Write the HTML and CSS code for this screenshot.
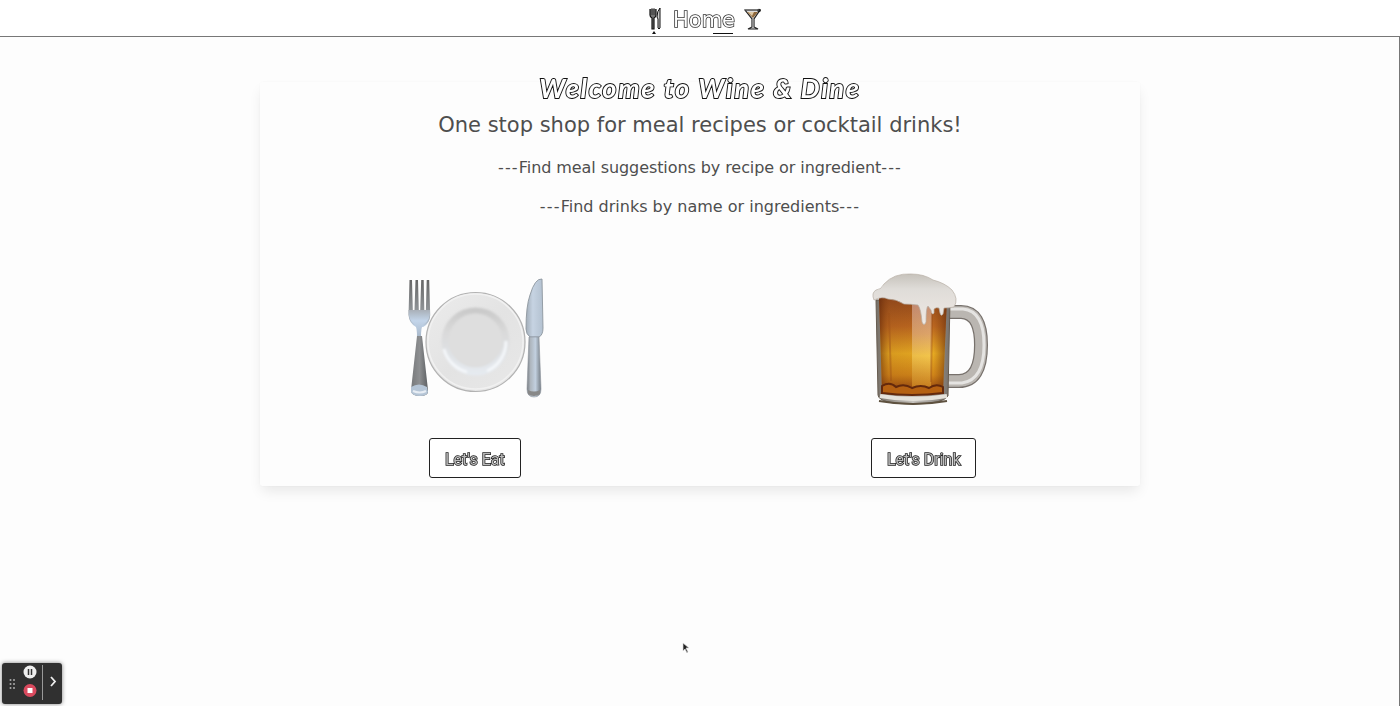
FILE: index.html
```html
<!DOCTYPE html>
<html lang="en">
<head>
<meta charset="utf-8">
<title>Wine &amp; Dine</title>
<link rel="stylesheet" href="styles.css">
</head>
<body>
<header class="navbar">
  <svg class="nav-utensils" width="13" height="28" viewBox="0 0 13 28">
    <path d="M1 2v6q0 2 2 3v11h2V11q2-1 2-3V2" fill="#777" stroke="#111" stroke-width="1.2"/>
    <path d="M3 1v7M5 1v7" stroke="#222" stroke-width=".8"/>
    <path d="M11 1q-3 3-3 9l1 2v9q1 2 2 0z" fill="#ccc" stroke="#111"/>
    <path d="M3 27l2-3 2 3z" fill="#111"/>
  </svg>
  <a class="nav-home">Home</a>
  <svg class="nav-cocktail" width="18" height="23" viewBox="0 0 18 23">
    <path d="M1 2h15l-6 9v8l4 2H4l4-2v-8z" fill="#ddd" stroke="#222" stroke-width="1.2"/>
    <path d="M3 4h11l-5 6z" fill="#8f683b"/><path d="M4 4h6l-2 4z" fill="#dfc9a6"/><path d="M9 11v8" stroke="#888" stroke-width="2"/>
    <circle cx="15" cy="2.500" r="1.800" fill="#222"/>
    <path d="M1 2h14" stroke="#666"/>
  </svg>
</header>
<main class="page">
  <section class="card">
    <h1 class="title">Welcome to Wine &amp; Dine</h1>
    <h2 class="subtitle">One stop shop for meal recipes or cocktail drinks!</h2>
    <p class="line"><span class="dash">---</span>Find meal suggestions by recipe or ingredient<span class="dash">---</span></p>
    <p class="line line-drinks"><span class="dash">---</span>Find drinks by name or ingredients<span class="dash">---</span></p>
    <div class="choices">
      <div class="choice choice-eat">
        <svg class="art" width="160" height="145" viewBox="0 0 160 145">
          <defs>
            <linearGradient id="handle"><stop offset="0" stop-color="#77797b"/><stop offset=".5" stop-color="#8d8f91"/><stop offset="1" stop-color="#5c5f62"/></linearGradient>
            <linearGradient id="blade"><stop offset="0" stop-color="#a2adb8"/><stop offset=".4" stop-color="#c6d3e2"/><stop offset="1" stop-color="#b3c1d0"/></linearGradient>
            <linearGradient id="knife"><stop offset="0" stop-color="#777c82"/><stop offset=".25" stop-color="#aeb6be"/><stop offset=".6" stop-color="#c2d0df"/><stop offset="1" stop-color="#757d85"/></linearGradient>
            <linearGradient id="tine" x2="0" y2="1"><stop offset="0" stop-color="#666"/><stop offset=".7" stop-color="#94989c"/><stop offset="1" stop-color="#bfd2e8"/></linearGradient>
            <linearGradient id="fork" x2="0" y2="1"><stop offset="0" stop-color="#a9b0b8"/><stop offset=".4" stop-color="#c3d5ea"/><stop offset="1" stop-color="#a8b8ca"/></linearGradient>
            <linearGradient id="well" x2="0" y2="1"><stop offset="0" stop-color="#c8c8c8"/><stop offset=".35" stop-color="#d9d9d9"/><stop offset="1" stop-color="#e6ebf1"/></linearGradient>
            <linearGradient id="plate" x2="1" y2="1"><stop offset="0" stop-color="#ececec"/><stop offset=".5" stop-color="#e3e3e3"/><stop offset="1" stop-color="#e8e8e8"/></linearGradient>
            <filter id="soft"><feGaussianBlur stdDeviation=".8"/></filter>
          </defs>
          <circle cx="80.500" cy="77" r="49.500" fill="url(#plate)" stroke="#b2b2b2" stroke-width="1.200"/>
          <circle cx="80.500" cy="76.500" r="47.500" fill="none" stroke="#f1f1f1" stroke-width="1.500"/>
          <g filter="url(#soft)">
            <circle cx="80.500" cy="76.500" r="34" fill="url(#well)"/>
            <path d="M49 84a32 32 0 0 0 23 23M92 106a32 32 0 0 0 19-30" fill="none" stroke="#f4f7fa" stroke-width="3"/>
            <circle cx="80.500" cy="75.500" r="27" fill="#dedede"/>
          </g>
          <path d="M14.500 15h2.500l.8 30h1.700l1-30h2.500l.8 30h1.400l1-30h2.500l.6 30h1.600l.8-30h2.500l1 35q0 8-7 12H21q-7-4-7.500-12z" fill="url(#tine)"/>
          <path d="M13.500 45h21.500q1 10-7 15-2 2-2 12h-4q0-10-2-12-7-5-6.500-15z" fill="url(#fork)"/>
          <path d="M22 71h5l6 54q1 6-8 6t-9-6z" fill="url(#handle)"/>
          <path d="M16 122q8-5 16 0l1 5q-1 4-8 4t-9-4z" fill="#b5c5d6"/>
          <path d="M18 126q7 3 13 0" fill="none" stroke="#e7edf4" stroke-width="2"/>
          <path d="M147 14q-7-1-12 16-4 11-4 34 0 5 4 8h9q4-2 4-9z" fill="url(#blade)" stroke="#8d969e" stroke-width=".9"/>
          <path d="M134 72h10l2 52q0 8-7 8t-7-8z" fill="url(#knife)" stroke="#8e969e" stroke-width=".6"/>
          <path d="M133 125q6 3 12 0v4q-6 4-12 0z" fill="#888"/>
        </svg>
        <button class="btn"><span class="btn-label">Let's Eat</span></button>
      </div>
      <div class="choice choice-drink">
        <svg class="art art-mug" width="140" height="145" viewBox="0 0 140 145">
          <defs>
            <linearGradient id="beer" x2="0" y2="1"><stop offset="0" stop-color="#8f471c"/><stop offset=".3" stop-color="#ba6620"/><stop offset=".58" stop-color="#e6aa22"/><stop offset=".8" stop-color="#cf8419"/><stop offset="1" stop-color="#84350d"/></linearGradient>
            <linearGradient id="shine" x2="0" y2="1"><stop offset="0" stop-color="#c58e78"/><stop offset=".35" stop-color="#dda46a"/><stop offset=".6" stop-color="#f3c64c"/><stop offset="1" stop-color="#c4771a"/></linearGradient>
            <linearGradient id="side"><stop offset="0" stop-color="#5d2408" stop-opacity=".65"/><stop offset=".15" stop-color="#85400d" stop-opacity=".15"/><stop offset=".8" stop-color="#85400d" stop-opacity="0"/><stop offset="1" stop-color="#632c0d" stop-opacity=".65"/></linearGradient>
            <linearGradient id="foam" x2="0" y2="1"><stop offset="0" stop-color="#c6c2bb"/><stop offset=".3" stop-color="#dfdcd8"/><stop offset="1" stop-color="#efe9e4"/></linearGradient>
            <linearGradient id="glass"><stop offset="0" stop-color="#777067"/><stop offset=".5" stop-color="#c7c4bf"/><stop offset="1" stop-color="#77716b"/></linearGradient>
          </defs>
          <path d="M88 47h13q20 0 20 33 0 36-22 36H86" fill="none" stroke="#77716c" stroke-width="14"/>
          <path d="M88 47h13q20 0 20 33 0 36-22 36H86" fill="none" stroke="#bab6b1" stroke-width="11.500"/>
          <path d="M88 44h15q21 2 21 36 0 35-22 38H88" fill="none" stroke="#e5e4e2" stroke-width="3"/>
          <path d="M16 35h74l-2 96q-5 8-35 8-34 0-35-9z" fill="url(#glass)" stroke="#675c50" stroke-width="1"/>
          <path d="M19 32h68l-4 95q-31 5-61 0z" fill="url(#beer)"/>
          <path d="M52 38h20l-1 88H52z" fill="url(#shine)"/>
          <path d="M19 32h68l-4 95q-31 5-61 0z" fill="url(#side)"/>
          <path d="M29 48l2 68M72 48l-1 69" stroke="#9a4e17" stroke-width="2" opacity=".4"/>
          <path d="M22 121q8-5 14 1 8-4 16 1 9-4 17 0 7-5 14-1v6q-31 4-61 0z" fill="#b56112" stroke="#64290c" stroke-width="2"/>
          <path d="M20 131q33 6 67 0" fill="none" stroke="#e5e2db" stroke-width="4"/>
          <path d="M19 136q34 6 68 0" fill="none" stroke="#5e513f" stroke-width="2"/>
          <path d="M14 35q-3-7 2-10 5 0 8-6Q34 8 51 9q13 0 22 6 12 3 19 10 7 9 2 17-5 1-10 1l-1 6q-2 3-3-1l-1-5q-3-1-5 1v4q-2 3-3-3l-3-4q-2 1-2 16-2 5-4 0-1-13-4-17-8-1-14-1-8-5-16-5-6-3-14 1z" fill="url(#foam)" stroke="#b8afa5" stroke-width=".7"/>
        </svg>
        <button class="btn btn-drink"><span class="btn-label">Let's Drink</span></button>
      </div>
    </div>
  </section>
  <svg class="pointer" width="8" height="12" viewBox="0 0 8 12"><path d="M1 1v8l2-2 2 4 1-1-2-4h3z" fill="#222" stroke="#ddd" stroke-width=".7"/></svg>
  <div class="recorder">
    <svg width="60" height="41" viewBox="0 0 60 41">
      <g fill="#aaa"><circle cx="8.500" cy="17" r="1"/><circle cx="12" cy="17" r="1"/><circle cx="8.500" cy="21" r="1"/><circle cx="12" cy="21" r="1"/><circle cx="8.500" cy="25" r="1"/><circle cx="12" cy="25" r="1"/></g>
      <circle cx="28" cy="9" r="6.500" fill="#eee"/><path d="M26.500 6v6M29.500 6v6" stroke="#333" stroke-width="1.500"/>
      <circle cx="28" cy="27.500" r="6.500" fill="#d94a5e"/><rect x="25.500" y="25" width="5" height="5" fill="#fff"/>
      <path d="M40.500 2v35" stroke="#999"/><path d="M49 14l4 4.500-4 4.500" fill="none" stroke="#eee" stroke-width="1.800"/>
    </svg>
  </div>
</main>
</body>
</html>
```
FILE: styles.css
```css
* { box-sizing: border-box; }
body {
  margin: 0;
  height: 706px;
  display: flex;
  flex-direction: column;
  overflow: hidden;
  background: #fdfdfd;
  color: #4e4e4e;
  font-family: "DejaVu Sans", Verdana, sans-serif;
}
.navbar {
  display: flex;
  align-items: flex-start;
  height: 37px;
  padding: 7px 0 0 649px;
  background: #fff;
  border-bottom: 1px solid #777;
}
.nav-home {
  width: 63px;
  margin-left: 11px;
  padding-bottom: 1px;
  font-size: 21px;
  line-height: 26px;
  white-space: nowrap;
  color: #fff;
  -webkit-text-stroke: 1.6px #333;
  paint-order: stroke fill;
  will-change: transform;
  background: linear-gradient(#111, #111) 40px 100% / 20px 1px no-repeat;
}
.nav-cocktail { margin: 1px 0 0 8px; }
.nav-home, .nav-cocktail, .nav-utensils { flex: none; }
.page {
  display: flow-root;
  flex: 1;
  border-right: 1px solid #777;
}
.card {
  width: 880px;
  height: 404px;
  margin: 45px 0 0 260px;
  text-align: center;
  border-radius: 3px;
  box-shadow: 0 7px 14px -2px rgba(10, 10, 10, .09), 0 0 3px rgba(10, 10, 10, .025);
}
.title {
  margin: 0;
  height: 30px;
  font: italic 700 27px/12px Lato, sans-serif;
  letter-spacing: 1.7px;
  color: #fff;
  -webkit-text-stroke: 1.9px #111;
  paint-order: stroke fill;
  will-change: transform;
}
.subtitle {
  margin: 0;
  font-size: 21px;
  line-height: 26px;
  font-weight: 400;
}
.line {
  margin: 18px 0 0;
  font-size: 16px;
  line-height: 24px;
  letter-spacing: -.08px;
}
.line-drinks {
  margin-top: 15px;
  letter-spacing: 0;
}
.dash { letter-spacing: 1.2px; }
.choices {
  display: grid;
  grid-template-columns: 430px 433px;
  column-gap: 17px;
  margin-top: 46px;
}
.choice {
  display: flex;
  flex-direction: column;
  align-items: center;
}
.art { display: block; }
.art-mug { margin-left: 13px; }
.btn {
  width: 92px;
  height: 40px;
  margin-top: 28px;
  padding: 3px 0 0;
  border: 1px solid #222;
  border-radius: 3px;
  background: #fff;
  color: #bbb;
  font: 400 16px/24px Roboto, sans-serif;
  -webkit-text-stroke: 1.5px #222;
  paint-order: stroke fill;
}
.btn-label {
  display: inline-block;
  will-change: transform;
}
.btn-drink { width: 105px; }
.pointer {
  position: absolute;
  left: 682px;
  top: 642px;
}
.recorder {
  position: absolute;
  left: 2px;
  top: 663px;
  width: 60px;
  height: 41px;
  border-radius: 3px;
  background: #303030;
  box-shadow: 0 0 4px rgba(0, 0, 0, .5);
}
```
